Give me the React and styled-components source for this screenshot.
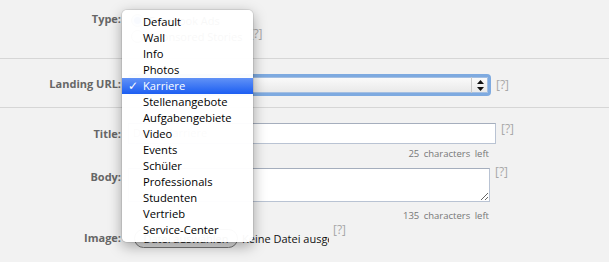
import React from 'react'
import styled, { createGlobalStyle } from 'styled-components'

const Global = createGlobalStyle`
  html, body {
    margin: 0;
    background: #f2f2f2;
    font-family: "Open Sans", "DejaVu Sans", sans-serif;
  }
`

const Page = styled.div`
  position: relative;
  width: 609px;
  height: 262px;
  overflow: hidden;
`

const Section = styled.div`
  padding: ${p => p.$pad};
  border-bottom: ${p => (p.$last ? 'none' : '1px solid #d6d6d6')};
`

const Row = styled.div`
  display: flex;
  align-items: flex-start;
  margin-top: ${p => p.$mt || 0}px;
`

const Label = styled.div`
  width: 121px;
  flex: none;
  text-align: right;
  font-size: 11px;
  line-height: 14px;
  font-weight: 700;
  color: #666;
  padding-top: ${p => p.$pt || 0}px;
`

const Field = styled.div`
  margin-left: 7px;
  display: flex;
  align-items: flex-start;
`

const Help = styled.span`
  font-size: 12px;
  line-height: 14px;
  color: #a8a8a8;
  margin-left: ${p => p.$ml || 5}px;
  margin-top: ${p => p.$mt || 0}px;
`

const Options = styled.div`
  display: flex;
  flex-direction: column;
  padding-left: 3px;
`

const Option = styled.label`
  display: flex;
  align-items: center;
  height: 16px;
  font-size: 11px;
  color: #333;
`

const Radio = styled.span`
  width: 11px;
  height: 11px;
  border-radius: 50%;
  border: 1px solid #999;
  background: ${p => (p.$on ? 'radial-gradient(circle, #3a6fd8 0 3px, #bcd2f7 4px)' : 'linear-gradient(#fff, #e4e4e4)')};
  margin-right: 5px;
`

const SelectRing = styled.div`
  width: 357px;
  height: 16px;
  border: 3px solid #7eaae0;
  border-radius: 4px;
  background: linear-gradient(#fbfbfb, #e8e8e8);
  display: flex;
  justify-content: flex-end;
  box-shadow: inset 0 0 0 1px #a4bfe2;
`

const Stepper = styled.div`
  width: 16px;
  border-left: 1px solid #c8c8c8;
  display: flex;
  align-items: center;
  justify-content: center;
`

const TextInput = styled.div`
  width: 358px;
  height: 17px;
  border: 1px solid #b9c3d3;
  border-top-color: #a5aebd;
  background: #fff;
  padding: 1px 4px;
  font-size: 11px;
  color: #888;
`

const TextArea = styled.textarea`
  width: 362px;
  height: 34px;
  box-sizing: border-box;
  border: 1px solid #b9c3d3;
  border-top-color: #a5aebd;
  background: #fff;
  resize: vertical;
  margin: 0;
  font-family: inherit;
`

const Count = styled.div`
  width: 489px;
  text-align: right;
  font-size: 9.5px;
  line-height: 12px;
  color: #777;
  word-spacing: 2px;
  margin-top: ${p => p.$mt}px;
`

const FileButton = styled.button`
  width: 104px;
  height: 19px;
  margin-left: 6px;
  border: 1px solid #777;
  border-radius: 10px;
  background: linear-gradient(#fefefe, #dcdcdc);
  font-family: inherit;
  font-size: 11px;
  color: #111;
  padding: 0;
`

const FileName = styled.span`
  width: 87px;
  overflow: hidden;
  white-space: nowrap;
  margin-left: 4px;
  font-size: 11px;
  line-height: 19px;
  color: #111;
`

const Menu = styled.ul`
  position: absolute;
  left: 122px;
  top: 10px;
  width: 131px;
  margin: 0;
  padding: 4px 0;
  list-style: none;
  background: rgba(255, 255, 255, 0.965);
  border-radius: 5px;
  box-shadow: 0 4px 14px rgba(0, 0, 0, 0.35), 0 0 0 1px rgba(0, 0, 0, 0.08);
`

const Item = styled.li`
  position: relative;
  height: 16px;
  line-height: 16px;
  padding-left: 21px;
  font-size: 11.2px;
  color: ${p => (p.$active ? '#fff' : '#000')};
  background: ${p => (p.$active ? 'linear-gradient(#6192f6, #1c5ef2)' : 'transparent')};
`

const Check = styled.span`
  position: absolute;
  left: 6px;
  top: 0;
  font-size: 12px;
  font-weight: 700;
  font-family: "DejaVu Sans", sans-serif;
`

const items = [
  'Default', 'Wall', 'Info', 'Photos', 'Karriere', 'Stellenangebote', 'Aufgabengebiete',
  'Video', 'Events', 'Schüler', 'Professionals', 'Studenten', 'Vertrieb', 'Service-Center',
]

export default function App() {
  return (
    <Page>
      <Global />
      <Section $pad="12px 0 14px">
        <Row>
          <Label $pt={0}>Type:</Label>
          <Field>
            <Options>
              <Option><Radio $on />Facebook Ads</Option>
              <Option><Radio />Sponsored Stories<Help $ml={7} $mt={-4}>[?]</Help></Option>
            </Options>
          </Field>
        </Row>
      </Section>
      <Section $pad="15px 0 11px">
        <Row>
          <Label $pt={3}>Landing URL:</Label>
          <Field>
            <SelectRing>
              <Stepper>
                <svg width="7" height="11" viewBox="0 0 7 11">
                  <path d="M3.5 0 L7 4 L0 4 Z M0 7 L7 7 L3.5 11 Z" fill="#111" />
                </svg>
              </Stepper>
            </SelectRing>
            <Help $mt={4}>[?]</Help>
          </Field>
        </Row>
      </Section>
      <Section $pad="15px 0 0" $last>
        <Row>
          <Label $pt={4}>Title:</Label>
          <Field>
            <TextInput>Deine Karriere</TextInput>
            <Help $mt={-1}>[?]</Help>
          </Field>
        </Row>
        <Count $mt={4}>25 characters left</Count>
        <Row $mt={8}>
          <Label $pt={2}>Body:</Label>
          <Field>
            <TextArea />
            <Help $mt={-3}>[?]</Help>
          </Field>
        </Row>
        <Count $mt={8}>135 characters left</Count>
        <Row $mt={7}>
          <Label $pt={2}>Image:</Label>
          <Field>
            <FileButton>Datei auswählen</FileButton>
            <FileName>Keine Datei ausgewählt</FileName>
            <Help $ml={4} $mt={-6}>[?]</Help>
          </Field>
        </Row>
      </Section>
      <Menu>
        {items.map(name => (
          <Item key={name} $active={name === 'Karriere'}>
            {name === 'Karriere' && <Check>✓</Check>}
            {name}
          </Item>
        ))}
      </Menu>
    </Page>
  )
}
